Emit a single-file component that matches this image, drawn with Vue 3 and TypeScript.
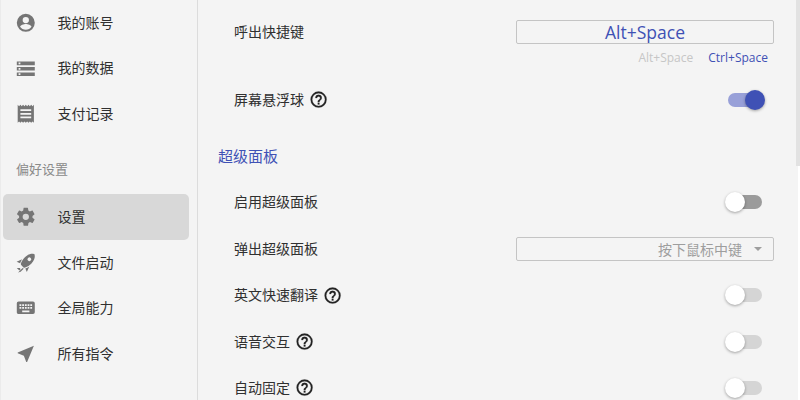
<script setup lang="ts">
const menuA = [
  { label: '我的账号', icon: 'account' },
  { label: '我的数据', icon: 'storage' },
  { label: '支付记录', icon: 'receipt' },
]
const menuB = [
  { label: '设置', icon: 'cog', active: true },
  { label: '文件启动', icon: 'rocket' },
  { label: '全局能力', icon: 'keyboard' },
  { label: '所有指令', icon: 'send' },
]
const icons: Record<string, string> = {
  account: 'M12 2a10 10 0 1 0 0 20 10 10 0 0 0 0-20zm0 3.5a3.5 3.5 0 1 1 0 7 3.5 3.5 0 0 1 0-7zm0 14.2c-2.6 0-4.9-1.3-6.3-3.3.03-2.1 4.2-3.2 6.3-3.2s6.27 1.1 6.3 3.2c-1.4 2-3.7 3.3-6.3 3.3z',
  storage: 'M2 20h20v-4H2v4zm2-3h2v2H4v-2zM2 4v4h20V4H2zm4 3H4V5h2v2zm-4 7h20v-4H2v4zm2-3h2v2H4v-2z',
  receipt: 'M3 2v20l1.5-1.5L6 22l1.5-1.5L9 22l1.5-1.5L12 22l1.5-1.5L15 22l1.5-1.5L18 22l1.5-1.5L21 22V2l-1.5 1.5L18 2l-1.5 1.5L15 2l-1.5 1.5L12 2l-1.5 1.5L9 2 7.5 3.5 6 2 4.5 3.5 3 2zm3 5h12v2H6V7zm0 4h12v2H6v-2zm0 4h12v2H6v-2z',
  cog: 'M19.4 13c.04-.33.1-.66.1-1s-.06-.67-.1-1l2.1-1.6c.2-.15.25-.42.12-.64l-2-3.46c-.12-.22-.39-.3-.61-.22l-2.49 1c-.52-.4-1.08-.73-1.69-.98l-.38-2.65A.49.49 0 0 0 14 2h-4c-.25 0-.46.18-.5.42l-.37 2.65c-.61.25-1.17.59-1.69.98l-2.49-1a.5.5 0 0 0-.61.22l-2 3.46c-.13.22-.07.49.12.64L4.6 11c-.04.33-.1.66-.1 1s.06.67.1 1l-2.1 1.6c-.2.15-.25.42-.12.64l2 3.46c.12.22.39.3.61.22l2.49-1c.52.4 1.08.73 1.69.98l.38 2.65c.03.24.24.42.49.42h4c.25 0 .46-.18.5-.42l.37-2.65c.61-.25 1.17-.59 1.69-.98l2.49 1c.22.08.49 0 .61-.22l2-3.46c.13-.22.07-.49-.12-.64L19.4 13zM12 15.5a3.5 3.5 0 1 1 0-7 3.5 3.5 0 0 1 0 7z',
  rocket: 'M13.13 22.19l-1.63-3.83c1.57-.58 3.04-1.36 4.4-2.27l-2.77 6.1M5.64 12.5l-3.83-1.63 6.1-2.77c-.91 1.36-1.69 2.83-2.27 4.4M21.61 2.39S16.66.27 11 5.93c-2.19 2.19-3.5 4.6-4.35 6.71-.28.75-.09 1.57.46 2.13l2.13 2.12c.55.56 1.37.74 2.12.46A19.1 19.1 0 0 0 18.07 13c5.66-5.66 3.54-10.61 3.54-10.61m-7.07 7.07a2 2 0 1 1 2.83-2.83 2 2 0 0 1-2.83 2.83M6.24 22l3.64-3.64a4.2 4.2 0 0 1-1.41-.71L3.41 22.7 6.24 22M2 17.76l2.83 2.83 1.41-1.41a4 4 0 0 1-.71-1.42L2 17.76z',
  keyboard: 'M20 5H4a2 2 0 0 0-2 2v10c0 1.1.9 2 2 2h16a2 2 0 0 0 2-2V7a2 2 0 0 0-2-2zM11 8h2v2h-2V8zm0 3h2v2h-2v-2zM8 8h2v2H8V8zm0 3h2v2H8v-2zM7 13H5v-2h2v2zm0-3H5V8h2v2zm9 7H8v-2h8v2zm0-4h-2v-2h2v2zm0-3h-2V8h2v2zm3 3h-2v-2h2v2zm0-3h-2V8h2v2z',
  send: 'M21 3L3 10.53v.98l6.84 2.65L12.48 21h.98L21 3z',
}
const help = 'M11 18h2v-2h-2v2zm1-16a10 10 0 1 0 0 20 10 10 0 0 0 0-20zm0 18a8 8 0 1 1 0-16 8 8 0 0 1 0 16zm0-14a4 4 0 0 0-4 4h2a2 2 0 1 1 4 0c0 2-3 1.75-3 5h2c0-2.25 3-2.5 3-5a4 4 0 0 0-4-4z'
const switches = [
  { label: '英文快速翻译' },
  { label: '语音交互' },
  { label: '自动固定' },
]
</script>

<template>
  <div class="page">
    <aside class="side">
      <div class="list">
        <div v-for="m in menuA" :key="m.label" class="item">
          <svg class="mi" viewBox="0 0 24 24"><path :d="icons[m.icon]" /></svg>
          <span>{{ m.label }}</span>
        </div>
      </div>
      <div class="subhead">偏好设置</div>
      <div class="list">
        <div v-for="m in menuB" :key="m.label" class="item" :class="{ active: m.active }">
          <svg class="mi" viewBox="0 0 24 24"><path :d="icons[m.icon]" /></svg>
          <span>{{ m.label }}</span>
        </div>
      </div>
    </aside>
    <main class="main">
      <div class="row hotkey">
        <div class="label">呼出快捷键</div>
        <div class="field">
          <div class="box accent">Alt+Space</div>
          <div class="chips">
            <span class="off">Alt+Space</span>
            <span class="on">Ctrl+Space</span>
          </div>
        </div>
      </div>
      <div class="row float">
        <div class="label">屏幕悬浮球
          <svg class="help" viewBox="0 0 24 24"><path :d="help" /></svg>
        </div>
        <div class="sw checked"><i></i></div>
      </div>
      <h3 class="section">超级面板</h3>
      <div class="row panel">
        <div class="label">启用超级面板</div>
        <div class="sw enabled"><i></i></div>
      </div>
      <div class="row panel">
        <div class="label">弹出超级面板</div>
        <div class="box select"><span>按下鼠标中键</span><b class="caret"></b></div>
      </div>
      <div v-for="s in switches" :key="s.label" class="row panel">
        <div class="label">{{ s.label }}
          <svg class="help" viewBox="0 0 24 24"><path :d="help" /></svg>
        </div>
        <div class="sw"><i></i></div>
      </div>
    </main>
    <div class="scroll"><div class="thumb"></div></div>
  </div>
</template>

<style>
html, body { margin: 0; background: #f4f4f4; overflow: hidden; }
</style>

<style scoped>
.page {
  width: 800px;
  height: 400px;
  display: flex;
  overflow: hidden;
  background: #f4f4f4;
  color: #303030;
  font-family: "Liberation Sans", "Noto Sans CJK SC", sans-serif;
  font-size: 14px;
}
.side {
  width: 198px;
  flex: none;
  box-sizing: border-box;
  border-left: 1px solid #ebebeb;
  border-right: 1px solid #dcdcdc;
  padding: 0 8.5px 0 2px;
}
.list { display: flex; flex-direction: column; }
.item {
  height: 45.6px;
  display: flex;
  align-items: center;
  padding-left: 12px;
  gap: 21px;
  border-radius: 5px;
}
.item span { padding-bottom: 2px; }
.item.active { background: #d8d8d8; }
.mi { width: 21.6px; height: 21.6px; fill: #757575; flex: none; }
.subhead { margin: 23px 0 14.5px 13px; color: #8a8a8a; height: 20px; line-height: 20px; font-size: 13px; }
.main { flex: 1; min-width: 0; padding: 0 22px 0 20px; box-sizing: border-box; }
.row { display: flex; justify-content: space-between; align-items: center; }
.label { padding: 0 0 2px 16px; display: flex; align-items: center; gap: 5px; }
.hotkey { align-items: flex-start; padding-top: 20px; height: 68px; box-sizing: border-box; }
.hotkey .label { line-height: 24px; }
.field { width: 258px; }
.box {
  width: 258px;
  height: 24px;
  box-sizing: border-box;
  border: 1px solid #c4c4c4;
  border-radius: 2px;
}
.accent { text-align: center; color: #3f51b5; font-size: 17.5px; line-height: 22px; font-family: "Open Sans", "Noto Sans CJK SC", sans-serif; }
.chips { display: flex; justify-content: flex-end; gap: 15px; padding: 7px 6px 0 0; font-size: 12px; line-height: 14px; font-family: "Open Sans", sans-serif; }
.off { color: #c6c6c6; }
.on { color: #3f51b5; }
.float { height: 64px; }
.section { margin: 15px 0 0; font-size: 15px; font-weight: 400; color: #3f51b5; height: 32.3px; line-height: 20px; }
.panel { height: 46.4px; }
.select { display: flex; justify-content: flex-end; align-items: center; color: #9e9e9e; padding-right: 11px; gap: 12px; }
.caret { width: 0; height: 0; border: 4px solid transparent; border-top: 4.5px solid #9e9e9e; border-bottom: 0; }
.sw { position: relative; width: 34px; height: 14px; margin-right: 12px; border-radius: 7px; background: #d5d5d5; }
.sw i {
  position: absolute; left: -3px; top: -3px; width: 20px; height: 20px; border-radius: 50%;
  background: #fff; box-shadow: 0 1px 3px rgba(0,0,0,.35);
}
.sw.enabled { background: #9b9b9b; }
.sw.checked { background: #98a0d8; }
.sw.checked i { left: 17px; background: #3f51b5; }
.help { width: 19.2px; height: 19.2px; margin-top: 2px; fill: #222; stroke: #222; stroke-width: .3; flex: none; }
.scroll { width: 4px; flex: none; box-sizing: border-box; border-right: 2px solid #fff; }
.thumb { width: 4px; height: 165.5px; background: #e2e2e2; }
</style>
